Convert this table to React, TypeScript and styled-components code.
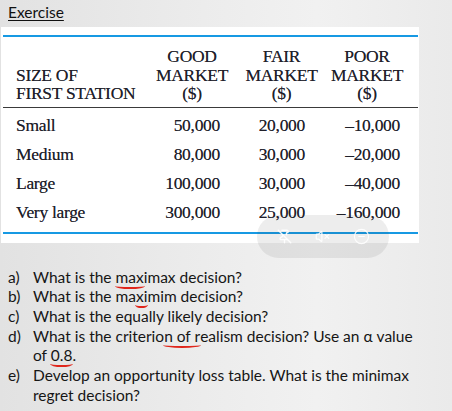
import styled, { createGlobalStyle } from 'styled-components';
import { PinOff, VolumeX, CircleMinus } from 'lucide-react';

const GlobalStyle = createGlobalStyle`
  html, body { margin: 0; padding: 0; }
  body { background: #e8e8e8; }
`;

const Page = styled.div`
  position: relative;
  width: 452px;
  height: 411px;
  overflow: hidden;
  background: linear-gradient(90deg, #e2e2e2 0%, #ececec 45%, #f1f1f1 70%, #eaeaea 100%);
  font-family: 'Lato', 'Open Sans', sans-serif;
`;

const Title = styled.div`
  height: 27px;
  padding-left: 8px;
  font-size: 15.5px;
  line-height: 25px;
  color: #111;
  text-decoration: underline;
  text-underline-offset: 2px;
`;

const Card = styled.div`
  width: 418px;
  margin-left: 1px;
  padding: 8px 1px 9px 2px;
  background: #fff;
  box-sizing: border-box;
`;

const Table = styled.div`
  display: grid;
  grid-template-columns: 147px 84px 95px 76px 1fr;
  border-top: 2px solid #1799e3;
  border-bottom: 2px solid #1799e3;
  font-family: 'Liberation Serif', 'Times New Roman', serif;
  font-size: 17.5px;
  color: #20202a;
  letter-spacing: -0.3px;
  text-shadow: 0 0 0.4px rgba(20, 20, 30, 0.6);
`;

const Head = styled.div<{ $align?: 'left' | 'center' }>`
  padding: 10px 0 4px ${p => (p.$align === 'left' ? '13px' : '0')};
  line-height: 18.5px;
  text-align: ${p => p.$align ?? 'center'};
  display: flex;
  flex-direction: column;
  justify-content: flex-end;
  border-bottom: 1px solid #3a3a3a;
  white-space: nowrap;
`;

const Cell = styled.div<{ $first?: boolean; $pad?: number; $label?: boolean }>`
  height: 29px;
  line-height: 29px;
  margin-top: ${p => (p.$first ? '3px' : '0')};
  text-align: ${p => (p.$label ? 'left' : 'right')};
  padding: 0 ${p => p.$pad ?? 0}px 0 ${p => (p.$label ? 13 : 0)}px;
  white-space: nowrap;
`;

const Spacer = styled.div<{ $first?: boolean; $head?: boolean }>`
  margin-top: ${p => (p.$first ? '3px' : '0')};
  border-bottom: ${p => (p.$head ? '1px solid #3a3a3a' : 'none')};
`;

const Bottom = styled.div`
  grid-column: 1 / -1;
  height: 5px;
`;

const Questions = styled.ol`
  list-style: none;
  margin: 25px 0 0 0;
  padding: 0 32px 0 8px;
  font-size: 15.5px;
  line-height: 19.7px;
  color: #161616;
`;

const Item = styled.li`
  display: grid;
  grid-template-columns: 25px 1fr;
`;

const Mark = styled.span`
  position: relative;
  &::after {
    content: '';
    position: absolute;
    left: -1px;
    right: -1px;
    bottom: -3px;
    height: 4px;
    border-bottom: 2px solid #e0261c;
    border-radius: 0 0 50% 50%;
  }
`;

const Controls = styled.div`
  position: absolute;
  left: 257px;
  top: 215px;
  width: 132px;
  height: 43px;
  border-radius: 22px;
  background: rgba(60, 60, 60, 0.09);
  display: flex;
  align-items: center;
  justify-content: space-around;
  padding: 0 8px;
  box-sizing: border-box;
  color: rgba(255, 255, 255, 0.9);
`;

const rows = [
  ['Small', '50,000', '20,000', '\u201310,000'],
  ['Medium', '80,000', '30,000', '\u201320,000'],
  ['Large', '100,000', '30,000', '\u201340,000'],
  ['Very large', '300,000', '25,000', '\u2013160,000'],
];

export default function App() {
  return (
    <Page>
      <GlobalStyle />
      <Title>Exercise</Title>
      <Card>
        <Table>
          <Head $align="left">
            <span>SIZE OF</span>
            <span>FIRST STATION</span>
          </Head>
          <Head>
            <span>GOOD</span>
            <span>MARKET</span>
            <span>($)</span>
          </Head>
          <Head>
            <span>FAIR</span>
            <span>MARKET</span>
            <span>($)</span>
          </Head>
          <Head>
            <span>POOR</span>
            <span>MARKET</span>
            <span>($)</span>
          </Head>
          <Spacer $head />
          {rows.map((r, i) => (
            <>
              <Cell key={r[0]} $label $first={i === 0}>{r[0]}</Cell>
              <Cell $first={i === 0} $pad={14}>{r[1]}</Cell>
              <Cell $first={i === 0} $pad={24}>{r[2]}</Cell>
              <Cell $first={i === 0} $pad={5}>{r[3]}</Cell>
              <Spacer $first={i === 0} />
            </>
          ))}
          <Bottom />
        </Table>
      </Card>
      <Questions>
        <Item><span>a)</span><span>What is the <Mark>max</Mark>imax decision?</span></Item>
        <Item><span>b)</span><span>What is the ma<Mark>xi</Mark>mim decision?</span></Item>
        <Item><span>c)</span><span>What is the equally likely decision?</span></Item>
        <Item>
          <span>d)</span>
          <span>What is the criterio<Mark>n of r</Mark>ealism decision? Use an α value of <Mark>0.8</Mark>.</span>
        </Item>
        <Item><span>e)</span><span>Develop an opportunity loss table. What is the minimax regret decision?</span></Item>
      </Questions>
      <Controls>
        <PinOff size={15} strokeWidth={2.2} />
        <VolumeX size={15} strokeWidth={2} />
        <CircleMinus size={17} strokeWidth={1.6} />
      </Controls>
    </Page>
  );
}
